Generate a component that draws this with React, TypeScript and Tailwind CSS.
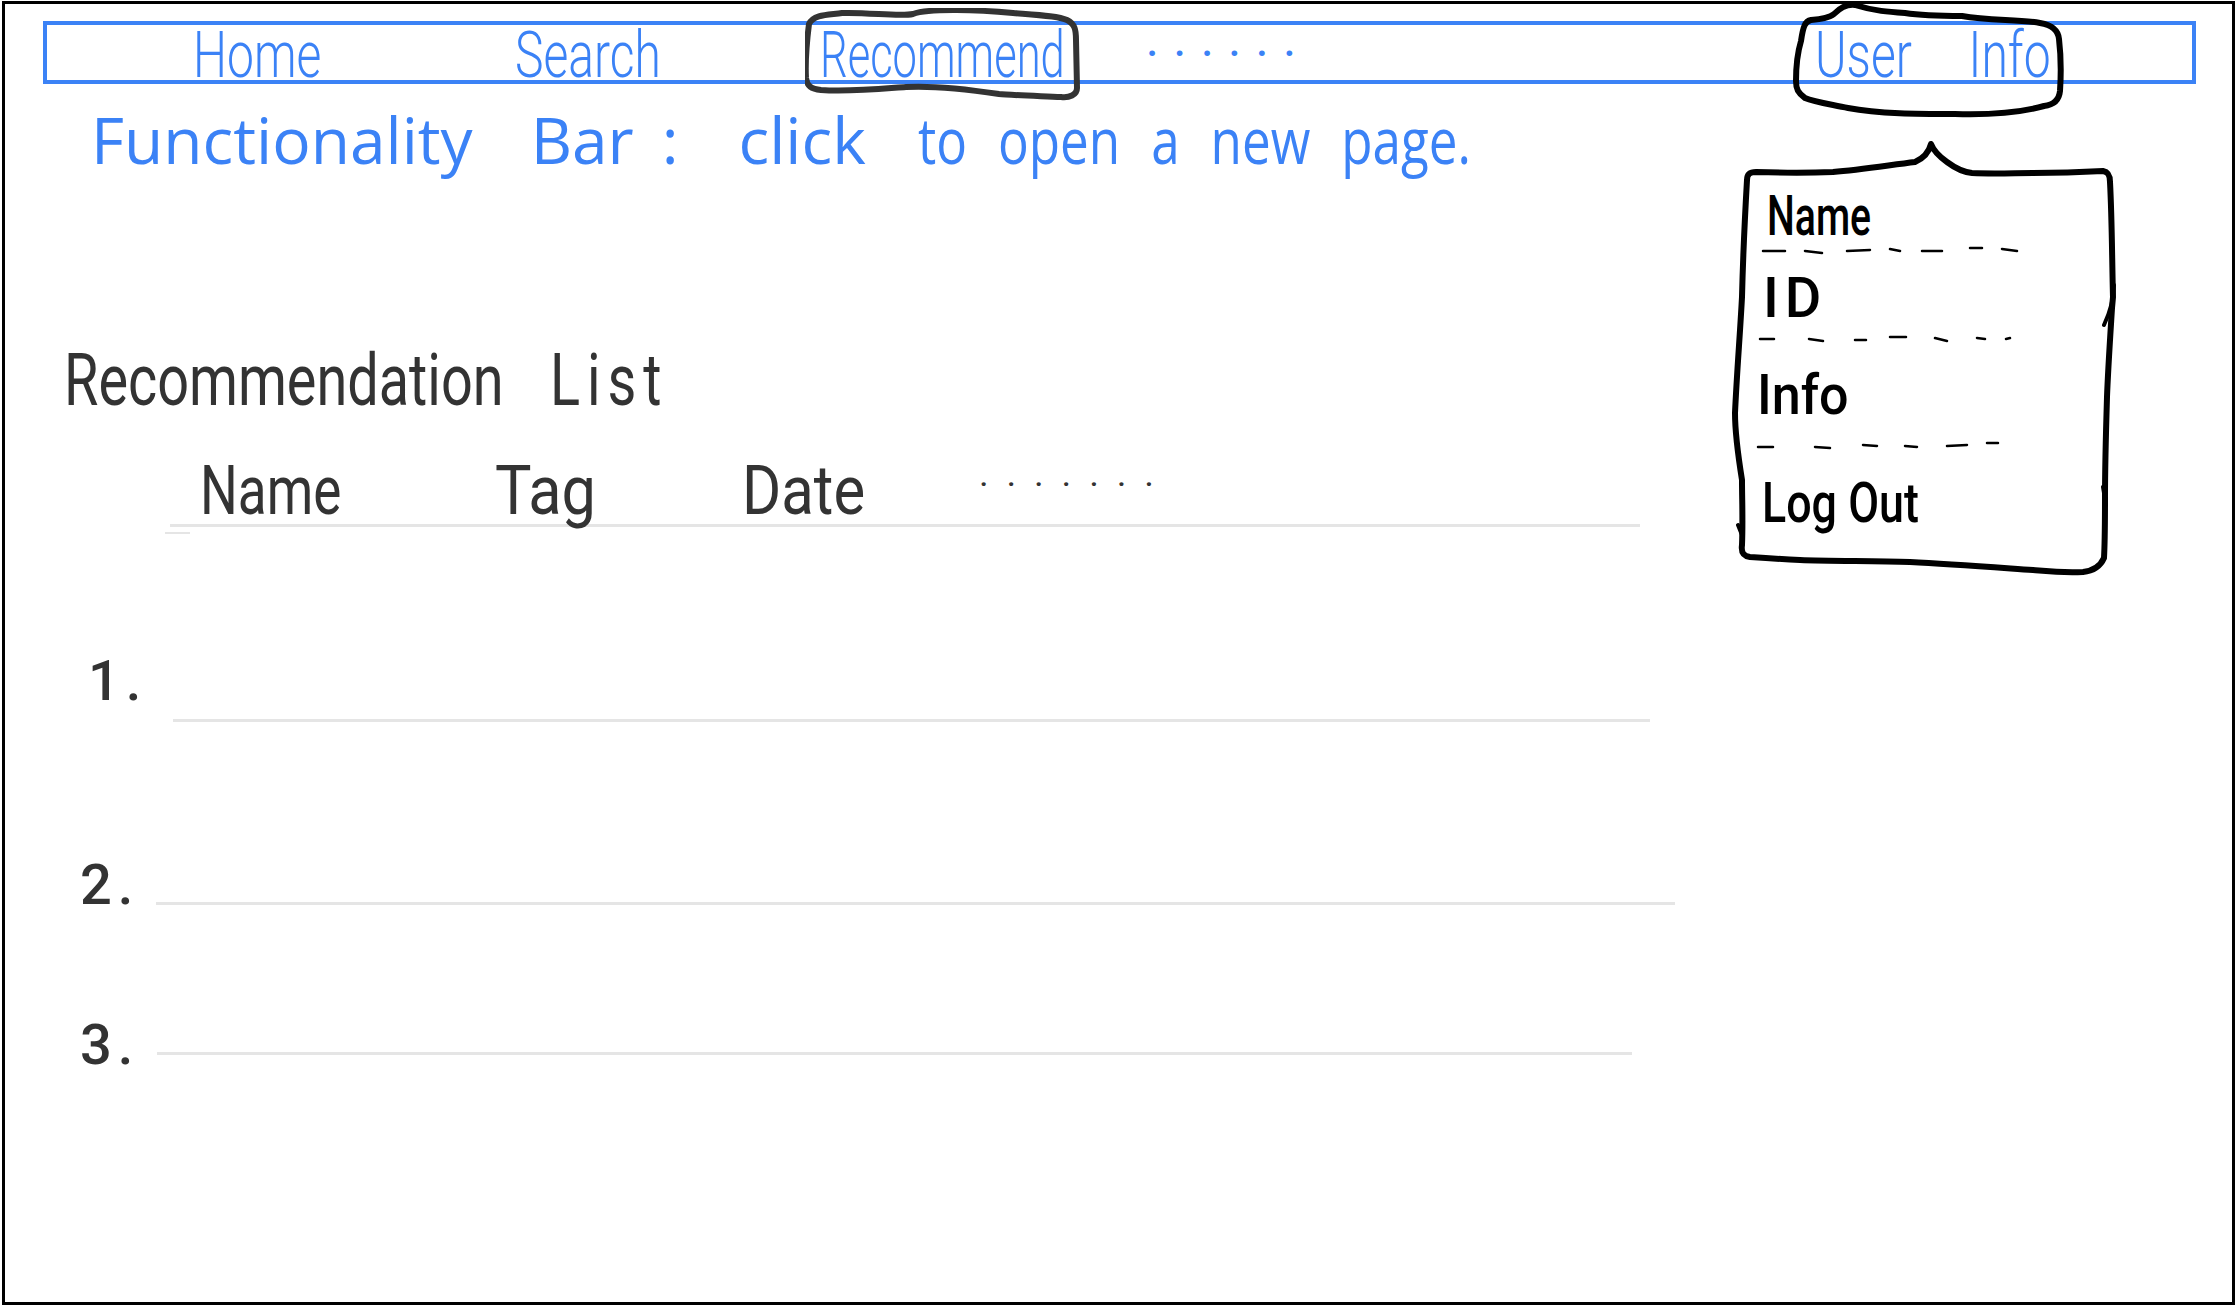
function NavItem({ label, className }: { label: string; className: string }) {
  return (
    <div className={`relative shrink-0 ${className}`}>
      <span className="block origin-left translate-y-[3px] scale-x-75 whitespace-nowrap text-[64px] leading-[56px] font-light [font-family:Roboto,sans-serif]">
        {label}
      </span>
    </div>
  );
}

function RecommendRing() {
  return (
    <svg className="absolute -left-[15px] -top-[17px]" width="276" height="96" viewBox="806 8 276 96" fill="none">
      <path
        d="M810 24 C815 14 830 15 843 13 C870 12 900 17 914 14 C930 8 980 10 1014 13 C1040 15 1060 16 1068 20 C1076 24 1077 30 1077 40 L1078 88 C1078 95 1070 98 1062 97 C1040 96 1010 95 1000 94 C960 88 925 86 907 87 C880 89 850 92 822 90 C812 89 808 86 807 78 C806 60 808 40 810 24Z"
        stroke="#333"
        strokeWidth="6"
        strokeLinejoin="round"
      />
    </svg>
  );
}

function UserRing() {
  return (
    <svg className="absolute -left-[24px] -top-[24px]" width="276" height="120" viewBox="1792 0 276 120" fill="none">
      <path
        d="M1802 40 C1804 26 1806 20 1812 19 C1822 18 1830 17 1835 13 C1842 6 1848 3 1856 4 C1875 10 1890 11 1906 12 C1925 15 1945 15 1963 15 C1990 20 2020 18 2041 22 C2052 24 2059 28 2060 38 C2062 55 2062 75 2061 90 C2060 100 2054 104 2045 105 C2020 112 1990 114 1956 113 C1920 113 1880 113 1849 107 C1830 103 1815 101 1806 97 C1799 92 1797 88 1797 80 C1797 65 1799 50 1802 40Z"
        stroke="#000"
        strokeWidth="6"
        strokeLinejoin="round"
      />
    </svg>
  );
}

function MenuOutline() {
  return (
    <svg className="absolute left-0 top-0" width="390" height="440" viewBox="1730 140 390 440" fill="none" stroke="#000" strokeLinecap="round" strokeLinejoin="round">
      <path
        strokeWidth="6"
        d="M1747 180 C1747 174 1750 172 1756 172 C1785 173 1810 173 1833 172 C1860 170 1890 165 1915 162 C1924 158 1929 152 1931 144 C1934 152 1940 157 1947 162 C1955 168 1962 172 1972 173 C1995 174 2015 173 2033 173 C2060 173 2085 172 2103 171 C2108 172 2110 175 2110 182 C2112 220 2112 260 2113 297 L2112 308 C2110 340 2108 370 2107 397 C2106 430 2105 470 2105 497 C2105 520 2105 540 2104 558 C2100 567 2092 571 2083 572 C2060 573 2045 571 2033 570 C1990 567 1950 564 1910 562 C1870 561 1830 561 1800 560 C1780 559 1765 558 1750 557 C1743 556 1741 552 1742 545 C1743 520 1742 500 1742 480 C1738 455 1735 435 1735 413 C1737 370 1740 335 1742 297 C1743 255 1745 215 1747 180Z"
      />
      {/* overdrawn bits of the sketch */}
      <path strokeWidth="4" d="M2114 285 C2114 300 2110 312 2104 325 M2103 487 L2106 505 M1738 525 L1742 535" />
      <path strokeWidth="2.5" d="M1763 251H1785 M1805 251L1822 253 M1847 251L1870 250 M1890 249L1900 251 M1922 251H1942 M1970 248H1982 M2002 249L2017 251" />
      <path strokeWidth="2.5" d="M1760 339H1774 M1809 339L1823 341 M1855 340H1866 M1890 337H1906 M1935 338L1947 341 M1977 338L1985 339 M2006 339L2010 338" />
      <path strokeWidth="2.5" d="M1758 447H1773 M1815 447L1830 448 M1863 445L1877 446 M1905 446L1917 447 M1947 446L1967 445 M1987 443H1998" />
    </svg>
  );
}

function UserMenu() {
  return (
    <div className="absolute left-[1730px] top-[140px] h-[440px] w-[390px] text-black [font-family:Roboto,sans-serif]">
      <MenuOutline />
      <div className="relative flex flex-col pl-[37px] pt-[48px] text-[56px] leading-[56px] font-medium">
        <span className="h-[82px] origin-left scale-x-[0.7]">Name</span>
        <span className="ml-[-4px] h-[97px] tracking-[6px]">ID</span>
        <span className="ml-[-10px] h-[108px] origin-left scale-x-[0.93]">Info</span>
        <span className="ml-[-5px] origin-left scale-x-[0.8] whitespace-nowrap">Log Out</span>
      </div>
    </div>
  );
}

const rows = [
  { n: "1.", left: "ml-[83px]", numW: "w-[85px]", lineW: "w-[1477px]", mt: "mt-[128px]", shift: "-translate-y-[11px]" },
  { n: "2.", left: "ml-[75px]", numW: "w-[76px]", lineW: "w-[1519px]", mt: "mt-[123px]", shift: "translate-y-[10px]" },
  { n: "3.", left: "ml-[75px]", numW: "w-[77px]", lineW: "w-[1475px]", mt: "mt-[90px]", shift: "translate-y-[20px]" },
];

export default function App() {
  return (
    <div className="relative h-[1308px] w-[2240px] bg-white pb-[3px] pl-[2px] pr-[5px] pt-[1px]">
      <div className="h-full w-full border-[3px] border-black">
        {/* Functionality bar */}
        <nav className="ml-[38px] mt-[17px] flex h-[63px] w-[2153px] items-center border-4 border-[#3b82f6] text-[#3b82f6]">
          <NavItem label="Home" className="ml-[146px] w-[127px]" />
          <NavItem label="Search" className="ml-[195px] w-[148px]" />
          <div className="relative ml-[157px] w-[247px] shrink-0">
            <span className="block origin-left translate-y-[3px] scale-x-[0.68] whitespace-nowrap text-[64px] leading-[56px] font-light [font-family:Roboto,sans-serif]">
              Recommend
            </span>
            <RecommendRing />
          </div>
          <div className="ml-[80px] w-[142px] shrink-0 -translate-y-[9px] text-[36px] leading-[30px] font-bold tracking-[17px] [font-family:Roboto,sans-serif]">
            ......
          </div>
          <div className="relative ml-[526px] w-[236px] shrink-0">
            <span className="block origin-left translate-y-[3px] scale-x-75 whitespace-nowrap text-[64px] leading-[56px] font-light [word-spacing:60px] [font-family:Roboto,sans-serif]">
              User Info
            </span>
            <UserRing />
          </div>
        </nav>

        <p className="ml-[86px] mt-[14px] whitespace-nowrap text-[64px] leading-[84px] font-medium text-[#3b82f6] [word-spacing:22px] [font-family:'Open_Sans',sans-serif]">
          Functionality<span className="ml-[58px]">Bar</span>
          <span className="ml-[28px]">:</span>
          <span className="ml-[60px]">click</span>{" "}
          <span className="ml-[14px] inline-block origin-left scale-x-[0.8]">to open a new page.</span>
        </p>

        {/* Recommendation list */}
        <section className="mt-[159px] text-[#333] [font-family:Roboto,sans-serif]">
          <h2 className="ml-[59px] origin-left scale-x-[0.775] whitespace-nowrap text-[72px] leading-[80px] [word-spacing:42px]">
            Recommendation <span className="tracking-[9px]">List</span>
          </h2>
          <div className="ml-[195px] mt-[38px] flex h-[64px] items-start text-[68px] leading-[64px]">
            <span className="w-[295px] origin-left scale-x-[0.78]">Name</span>
            <span className="w-[247px] origin-left scale-x-[0.9]">Tag</span>
            <span className="w-[238px] origin-left scale-x-[0.88]">Date</span>
            <span className="-mt-[14px] text-[26px] font-bold tracking-[20px]">.......</span>
          </div>
          <div className="ml-[165px] mt-[1px] h-[3px] w-[1470px] bg-[#e5e5e5]" />
          <div className="ml-[160px] mt-[5px] h-[2px] w-[25px] bg-[#e5e5e5]" />

          {rows.map((row) => (
            <div key={row.n} className={`flex items-end ${row.mt} ${row.left}`}>
              <span className={`shrink-0 text-[56px] leading-[60px] font-medium tracking-[6px] ${row.numW} ${row.shift}`}>{row.n}</span>
              <div className={`h-[3px] shrink-0 bg-[#e5e5e5] ${row.lineW}`} />
            </div>
          ))}
        </section>
      </div>
      <UserMenu />
    </div>
  );
}
